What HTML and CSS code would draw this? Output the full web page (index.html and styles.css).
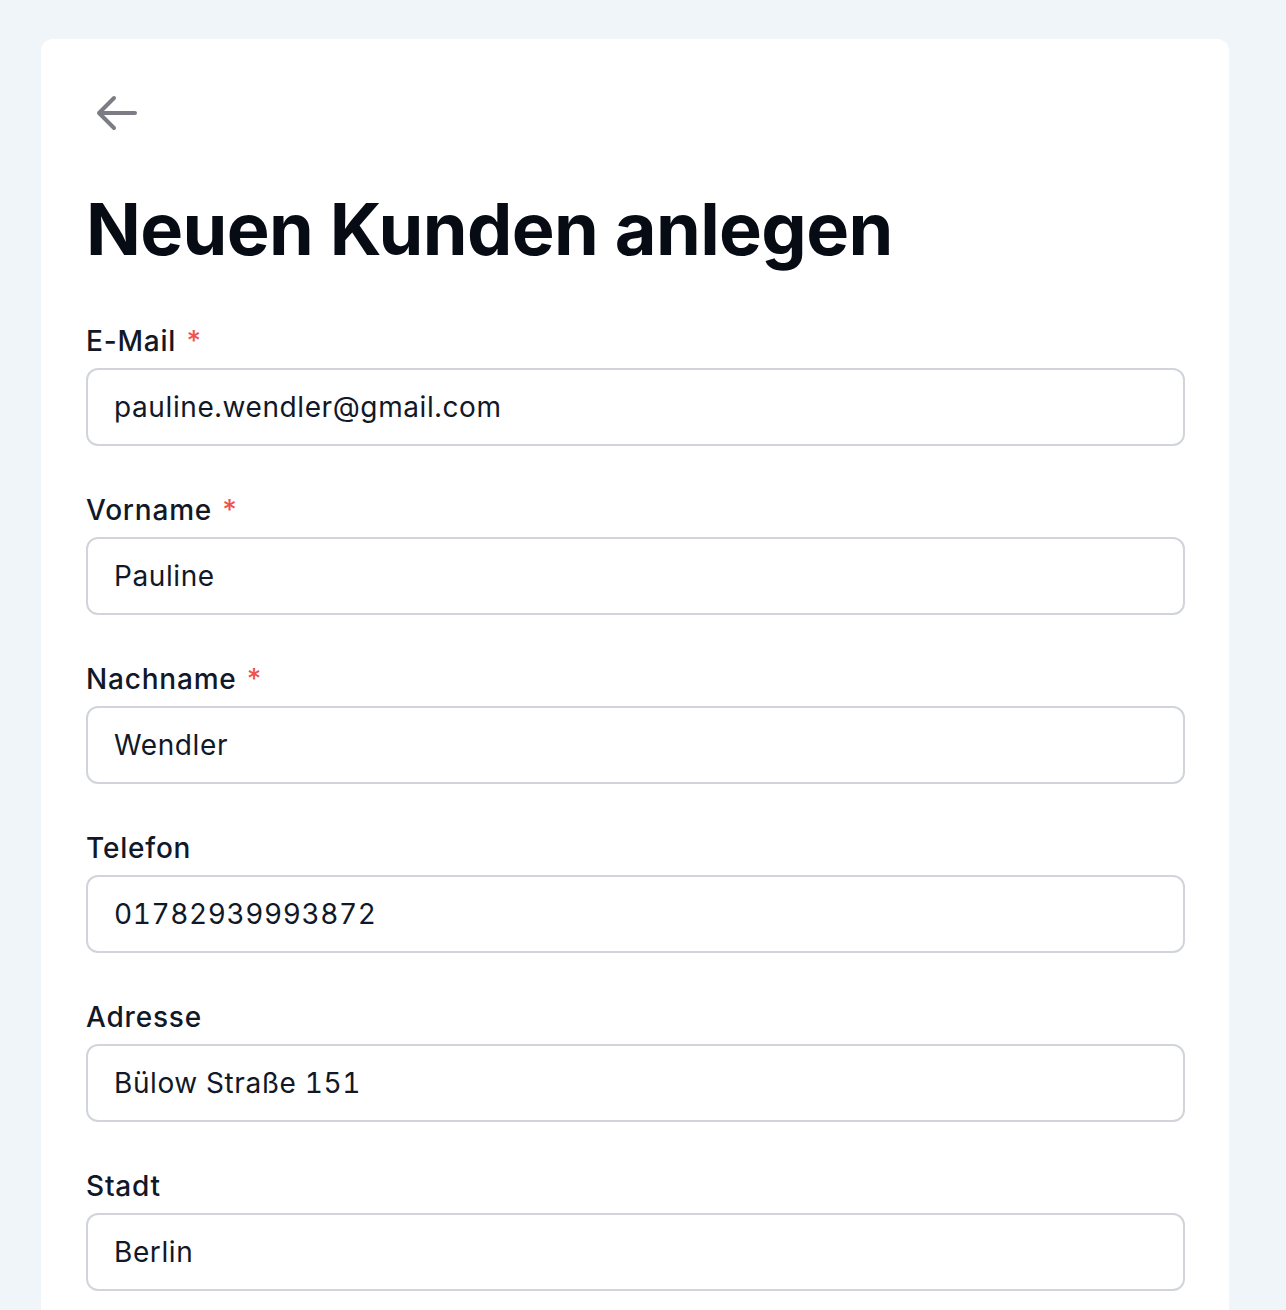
FILE: index.html
```html
<!DOCTYPE html>
<html lang="de">
<head>
<meta charset="utf-8">
<title>Neuen Kunden anlegen</title>
<link rel="stylesheet" href="styles.css">
</head>
<body>
<div class="page">
  <main class="card">
    <button class="back" type="button" aria-label="Zurück">
      <svg width="48" height="48" viewBox="0 0 24 24" fill="none" stroke="currentColor" stroke-width="2" stroke-linecap="round" stroke-linejoin="round"><path d="M10.5 19.5 3 12m0 0 7.5-7.5M3 12h18"/></svg>
    </button>
    <h1 class="title">Neuen Kunden anlegen</h1>
    <form class="form">
      <div class="field">
        <label class="label">E-Mail <span class="req">*</span></label>
        <input class="input" type="text" value="pauline.wendler@gmail.com">
      </div>
      <div class="field">
        <label class="label">Vorname <span class="req">*</span></label>
        <input class="input" type="text" value="Pauline">
      </div>
      <div class="field">
        <label class="label">Nachname <span class="req">*</span></label>
        <input class="input" type="text" value="Wendler">
      </div>
      <div class="field">
        <label class="label">Telefon</label>
        <input class="input" type="text" value="01782939993872">
      </div>
      <div class="field">
        <label class="label">Adresse</label>
        <input class="input" type="text" value="Bülow Straße 151">
      </div>
      <div class="field">
        <label class="label">Stadt</label>
        <input class="input" type="text" value="Berlin">
      </div>
    </form>
  </main>
</div>
</body>
</html>
```
FILE: styles.css
```css
html, body {
  margin: 0;
  padding: 0;
  background: #f0f5f9;
  font-family: Inter, "Noto Sans", sans-serif;
  color: #111827;
}
.page {
  padding: 39px 57px 0 41px;
}
.card {
  width: 1188px;
  box-sizing: border-box;
  background: #ffffff;
  border-radius: 12px 12px 0 0;
  padding: 50px 44px 20px 45px;
}
.back {
  display: block;
  background: none;
  border: 0;
  padding: 0;
  margin: 0 0 52px 7px;
  width: 48px;
  height: 48px;
  color: #7c7c84;
  cursor: pointer;
}
.back svg {
  display: block;
}
.title {
  margin: 0 0 52px;
  font-size: 72px;
  line-height: 80px;
  font-weight: 700;
  letter-spacing: -0.6px;
  color: #070b14;
}
.form {
  display: flex;
  flex-direction: column;
  gap: 44px;
}
.field {
  display: flex;
  flex-direction: column;
}
.label {
  display: block;
  height: 40px;
  font-size: 28px;
  line-height: 40px;
  font-weight: 500;
  letter-spacing: 0.8px;
  margin-bottom: 7px;
  color: #111827;
}
.req {
  color: #ef5350;
  margin-left: 2px;
}
.input {
  box-sizing: border-box;
  width: 100%;
  height: 78px;
  border: 2px solid #d1d5db;
  border-radius: 12px;
  padding: 0 26px;
  font-family: Inter, "Noto Sans", sans-serif;
  font-size: 28px;
  letter-spacing: 0.6px;
  font-variant-numeric: tabular-nums;
  color: #111827;
  background: #ffffff;
  outline: none;
}
```
